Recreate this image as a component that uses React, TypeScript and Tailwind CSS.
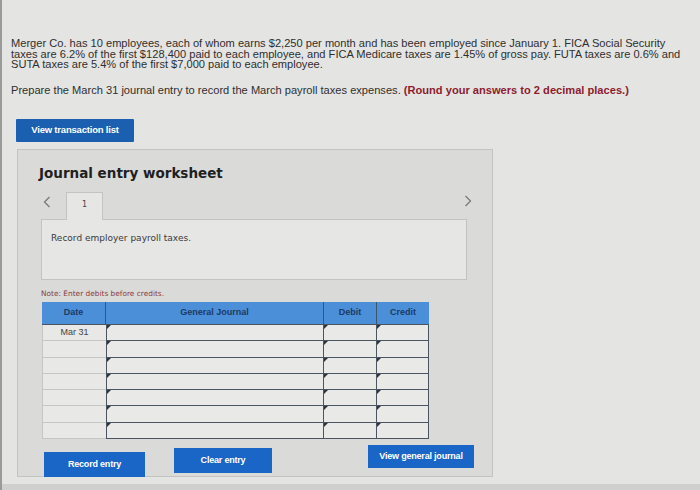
import React from "react";

function Tri() {
  return (
    <svg className="absolute left-0 top-0" width="4" height="4" viewBox="0 0 4 4">
      <polygon points="0,0 4,0 0,4" fill="#2d3640" />
    </svg>
  );
}

function InputCell({ w }: { w: string }) {
  return (
    <div className={`relative ${w} h-full bg-[#e9e9e7] border-r-[1.5px] border-b-[1.5px] border-[#4a5561]`}>
      <Tri />
    </div>
  );
}

function Chevron({ dir }: { dir: "left" | "right" }) {
  return (
    <svg width="8" height="12" viewBox="0 0 8 12">
      <polyline
        points={dir === "left" ? "6.5,1 1.5,6 6.5,11" : "1.5,1 6.5,6 1.5,11"}
        fill="none"
        stroke="#7a7a7a"
        strokeWidth="1.3"
      />
    </svg>
  );
}

export default function App() {
  const rows = ["Mar 31", "", "", "", "", "", ""];
  return (
    <div className="w-[700px] h-[490px] bg-[#e4e4e2] overflow-hidden font-['Liberation_Sans',Arial,sans-serif] text-[#2f2f2f] border-l-[2px] border-[#9a9a98] flex flex-col">
      <div className="flex-1 pt-[38px] pl-[9px]">
        <p className="text-[11.1px] leading-[10.5px] whitespace-nowrap">
          Merger Co. has 10 employees, each of whom earns $2,250 per month and has been employed since January 1. FICA Social Security
          <br />
          taxes are 6.2% of the first $128,400 paid to each employee, and FICA Medicare taxes are 1.45% of gross pay. FUTA taxes are 0.6% and
          <br />
          SUTA taxes are 5.4% of the first $7,000 paid to each employee.
        </p>
        <p className="mt-[15px] text-[11.1px] leading-[10.5px] whitespace-nowrap">
          Prepare the March 31 journal entry to record the March payroll taxes expenses.{" "}
          <span className="font-bold text-[#8c1c2e]">(Round your answers to 2 decimal places.)</span>
        </p>
        <button className="mt-[24px] ml-[5px] w-[118px] h-[23px] bg-[#1b60b0] rounded-[1px] text-white font-bold text-[9.5px] tracking-[-0.2px] flex items-center justify-center">
          View transaction list
        </button>

        <div className="mt-[7px] ml-[6px] w-[476px] h-[328px] bg-[#dadad8] border border-[#c3c3c1] flex flex-col pl-[23px]">
          <h2 className="shrink-0 mt-[15px] -ml-[2px] font-['DejaVu_Sans',Verdana,sans-serif] font-bold text-[13.5px] leading-[16px] text-[#1f1f1f]">
            Journal entry worksheet
          </h2>

          <div className="shrink-0 mt-[11px] flex items-end h-[27px] w-[426px] relative">
            <span className="absolute left-[2px] top-[4px] flex">
              <Chevron dir="left" />
            </span>
            <div className="ml-[25px] w-[37px] h-[28px] -mb-px bg-[#e6e6e4] border border-b-0 border-[#c3c3c1] relative z-10 flex items-start justify-center pt-[6px] font-['DejaVu_Sans',sans-serif] text-[8px] text-[#444]">
              1
            </div>
            <span className="absolute right-[-5px] top-[3px] flex">
              <Chevron dir="right" />
            </span>
          </div>
          <div className="shrink-0 w-[426px] h-[61px] bg-[#e6e6e4] border border-[#c3c3c1] pl-[9px] pt-[12px] font-['DejaVu_Sans',sans-serif] text-[9px] text-[#3a3a3a]">
            Record employer payroll taxes.
          </div>

          <div className="shrink-0 mt-[9px] font-['DejaVu_Sans',sans-serif] text-[7.4px] leading-[10px] text-[#8a3b3b]">
            Note: Enter debits before credits.
          </div>

          <div className="shrink-0 mt-[3px] ml-[1px] w-[387px] flex flex-col">
            <div className="flex h-[22px] bg-[#4b8fd9] text-[#1c3a64] font-bold text-[9px]">
              <div className="w-[64px] flex items-center justify-center border-r-[1.5px] border-[#3c5470]">Date</div>
              <div className="w-[218px] flex items-center justify-center border-r-[1.5px] border-[#3c5470]">General Journal</div>
              <div className="w-[53px] flex items-center justify-center border-r-[1.5px] border-[#3c5470]">Debit</div>
              <div className="w-[52px] flex items-center justify-center">Credit</div>
            </div>
            <div className="flex flex-col border-t-[1.5px] border-[#4a5561]">
              {rows.map((d, i) => (
                <div key={i} className="flex h-[16.3px]">
                  <div className="w-[64px] h-full bg-[#e8e8e6] border-l border-b border-[#c6c6c4] flex items-center justify-center text-[9px] text-[#444]">
                    {d}
                  </div>
                  <div className="h-full border-l-[1.5px] border-[#4a5561]" />
                  <InputCell w="w-[217px]" />
                  <InputCell w="w-[53px]" />
                  <InputCell w="w-[52px]" />
                </div>
              ))}
            </div>
          </div>

          <div className="shrink-0 flex items-start text-white font-bold text-[9px] tracking-[-0.2px]">
            <button className="mt-[13px] ml-[3px] w-[101px] h-[25px] bg-[#1a66c6] flex items-center justify-center">Record entry</button>
            <button className="mt-[9px] ml-[29px] w-[98px] h-[25px] bg-[#1a66c6] flex items-center justify-center">Clear entry</button>
            <button className="mt-[6px] ml-[96px] w-[106px] h-[23px] bg-[#1a66c6] flex items-center justify-center">View general journal</button>
          </div>
        </div>
      </div>
      <div className="h-[6px] bg-[#cfcfcd]" />
    </div>
  );
}
